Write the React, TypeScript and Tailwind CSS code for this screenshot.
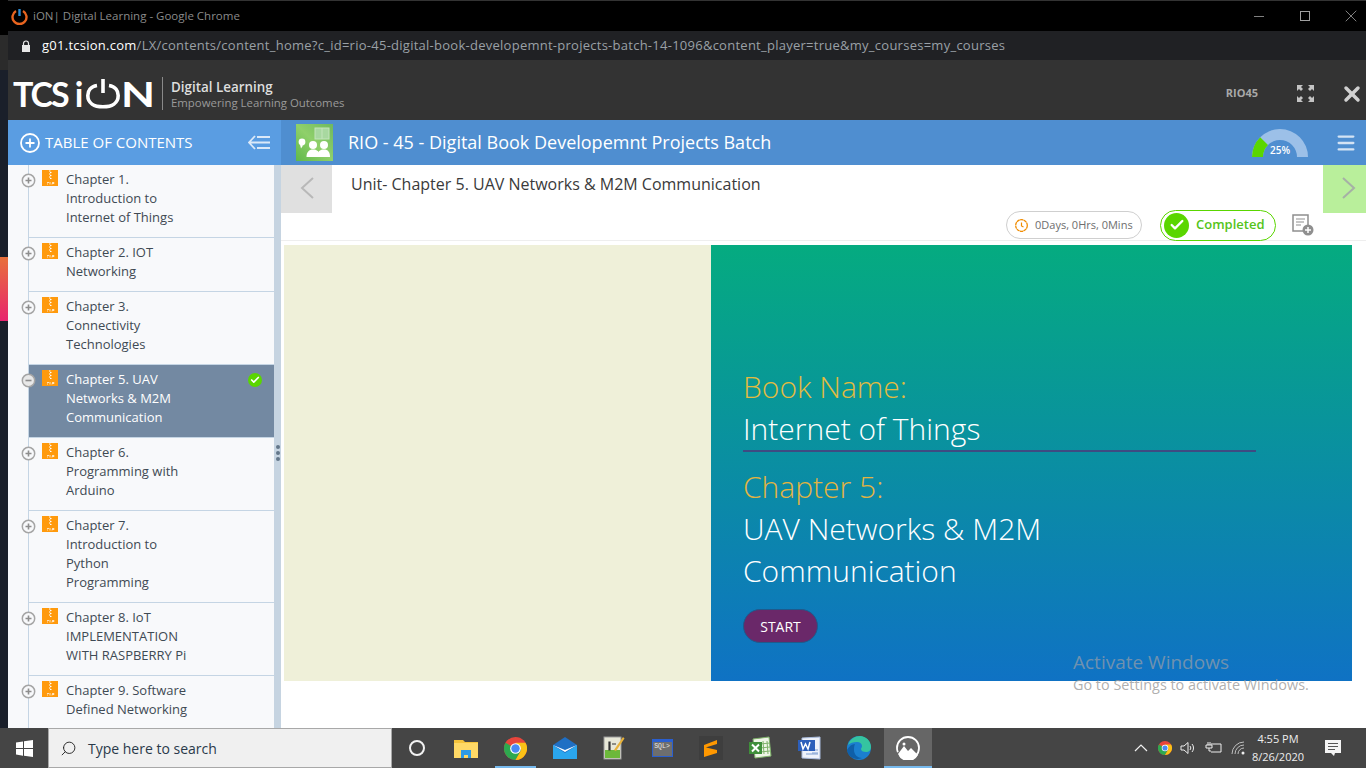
import { Menu, Search, X, Check } from "lucide-react";

const chapters = [
  { lines: ["Chapter 1.", "Introduction to", "Internet of Things"] },
  { lines: ["Chapter 2. IOT", "Networking"] },
  { lines: ["Chapter 3.", "Connectivity", "Technologies"] },
  { lines: ["Chapter 5. UAV", "Networks & M2M", "Communication"], active: true },
  { lines: ["Chapter 6.", "Programming with", "Arduino"] },
  { lines: ["Chapter 7.", "Introduction to", "Python", "Programming"] },
  { lines: ["Chapter 8. IoT", "IMPLEMENTATION", "WITH RASPBERRY Pi"] },
  { lines: ["Chapter 9. Software", "Defined Networking"], last: true },
];

function ZipIcon() {
  return (
    <svg width="16" height="16" viewBox="0 0 16 16" className="shrink-0">
      <rect width="16" height="16" fill="#ff9a0d" />
      <path d="M7 1h1.500M8 2.500h1.500M7 4h1.500M8 5.500h1.500M7 7h1.500M8 8.500h1.500" stroke="#fff" strokeWidth="1" />
      <path d="M5 12.500h2M5 14h1M8 12v2.500M10 12.500h2v1h-2v1" stroke="#fff" strokeWidth="0.7" fill="none" />
    </svg>
  );
}

function TreeToggle({ open }: { open?: boolean }) {
  return (
    <svg width="15" height="15" viewBox="0 0 15 15">
      <circle cx="7.500" cy="7.500" r="6.200" fill={open ? "#e8e8e8" : "#f8f9fb"} stroke="#a5a5a5" strokeWidth="1.500" />
      <path d={open ? "M4.500 7.500h6" : "M4.500 7.500h6M7.500 4.500v6"} stroke="#8d8d8d" strokeWidth="1.600" />
    </svg>
  );
}

function PowerLogo() {
  return (
    <svg width="34" height="30" viewBox="0 0 34 30" className="shrink-0 ml-[3px]">
      <path d="M11 6.500C4.500 7.500 1.800 12 1.800 16.500 1.800 24 8 27.800 17 27.800S32.200 24 32.200 16.500C32.200 12 29.500 7.500 23 6.500" fill="none" stroke="#fff" strokeWidth="3.600" />
      <path d="M17 0v14" stroke="#fff" strokeWidth="3.600" />
    </svg>
  );
}

function CourseIcon() {
  return (
    <svg width="37" height="37" viewBox="0 0 37 37" className="shrink-0">
      <defs>
        <linearGradient id="course" x1="0" y1="1" x2="1" y2="0">
          <stop offset="0" stopColor="#5fb84a" />
          <stop offset="0.5" stopColor="#8fd06a" />
          <stop offset="1" stopColor="#6fb95f" />
        </linearGradient>
      </defs>
      <rect width="37" height="37" fill="url(#course)" />
      <rect x="19" y="4" width="14" height="11" fill="#a8d8a0" stroke="#c4e4bc" />
      <path d="M26 4v11" stroke="#c4e4bc" />
      <circle cx="6" cy="18" r="3.400" fill="#fff" />
      <path d="M4 20.500l1 4 2-3z" fill="#fff" />
      <circle cx="17" cy="21" r="4" fill="#fff" />
      <circle cx="28" cy="21" r="4" fill="#fff" />
      <path d="M10.500 33c0-5 2.500-7.500 6.500-7.500s5.500 2 5.500 3c0-1 1.500-3 5.500-3s6 2.500 6 7.500z" fill="#fff" />
    </svg>
  );
}

function Gauge() {
  return (
    <div className="relative w-[56px] h-[28px]">
      <svg width="56" height="28" viewBox="0 0 56 28">
        <path d="M0 28a28 28 0 0 1 56 0H45a17 17 0 0 0-34 0z" fill="#9cc0e8" />
        <path d="M0 28a28 28 0 0 1 8.200-19.800L16 16a17 17 0 0 0-5 12z" fill="#5ad600" />
      </svg>
      <span className="absolute left-0 right-0 top-[14px] text-center text-[10px] leading-[14px] text-white font-semibold">25%</span>
    </div>
  );
}

function ChromeIcon({ size }: { size: number }) {
  return (
    <svg width={size} height={size} viewBox="0 0 24 24">
      <circle cx="12" cy="12" r="12" fill="#e8453c" />
      <path d="M12 12L1.600 6A12 12 0 0 0 12 24l6-10.400z" fill="#2da94f" />
      <path d="M12 6h10.400A12 12 0 0 1 12 24l6-10.400z" fill="#fbc116" />
      <circle cx="12" cy="12" r="5.600" fill="#fff" />
      <circle cx="12" cy="12" r="4.400" fill="#4a8af4" />
    </svg>
  );
}

function TaskIcons() {
  return (
    <div className="flex h-full items-stretch">
      <div className="w-[49px] flex items-center justify-center">
        <div className="w-[16px] h-[16px] rounded-full border-[2.5px] border-[#f2f2f2]" />
      </div>
      <div className="w-[50px] flex items-center justify-center">
        <svg width="24" height="20" viewBox="0 0 24 20">
          <path d="M0 2h9l2 2h13v16H0z" fill="#f5c33b" />
          <path d="M0 5h24v15H0z" fill="#ffd966" />
          <path d="M7 12h10v8h-3v-3h-4v3H7z" fill="#2f9be6" />
        </svg>
      </div>
      <div className="w-[49px] flex flex-col items-center justify-center relative">
        <ChromeIcon size={23} />
        <div className="absolute bottom-0 left-[4px] right-[4px] h-[2px] bg-[#76b9ed]" />
      </div>
      <div className="w-[49px] flex items-center justify-center">
        <svg width="24" height="22" viewBox="0 0 24 22">
          <path d="M0 8L12 0l12 8v14H0z" fill="#1f6fc4" />
          <path d="M0 8l12 8 12-8v14H0z" fill="#2aa6ee" />
          <path d="M0 8l12 7 12-7-12 5z" fill="#fff" />
        </svg>
      </div>
      <div className="w-[49px] flex items-center justify-center">
        <svg width="22" height="24" viewBox="0 0 22 24">
          <rect x="1" y="1" width="17" height="22" fill="#e8e8d8" stroke="#999" />
          <rect x="2" y="14" width="15" height="8" fill="#6cb83a" />
          <path d="M6 6h1v8H6zM9 8h4" stroke="#333" strokeWidth="1.200" />
          <path d="M20 1l1.500 1.500L13 15l-2-1z" fill="#e8b23a" />
        </svg>
      </div>
      <div className="w-[48px] flex items-center justify-center">
        <div className="w-[21px] h-[18px] bg-[#6e6e6e] border border-[#2a5fd0] border-t-[3px] text-[6.5px] leading-[10px] text-[#e8e8e8] font-mono text-center">SQL&gt;</div>
      </div>
      <div className="w-[49px] flex items-center justify-center">
        <div className="w-[24px] h-[24px] bg-[#3e3e3e] flex items-center justify-center">
          <svg width="13" height="17" viewBox="0 0 13 17">
            <path d="M13 0v4L0 8V5zM0 7l13 3v3L0 17v-4z" fill="#ff9800" />
          </svg>
        </div>
      </div>
      <div className="w-[49px] flex items-center justify-center">
        <svg width="24" height="24" viewBox="0 0 24 24">
          <path d="M5 3l16-2 2 19-16 2z" fill="#eef5e6" stroke="#7fb36a" />
          <path d="M12 8l10-1M12 12l10-1M12 16l10-1M15 5l1 13M19 5l1 13" stroke="#7fb36a" />
          <rect x="1" y="6" width="13" height="12" fill="#3f8f3a" />
          <path d="M4 8.500l7 7M11 8.500l-7 7" stroke="#fff" strokeWidth="2" />
        </svg>
      </div>
      <div className="w-[50px] flex items-center justify-center">
        <svg width="24" height="24" viewBox="0 0 24 24">
          <path d="M5 2l18-1v22l-18-1z" fill="#eef2fa" stroke="#a9bbdd" />
          <path d="M15 14h6M15 17h6M9 18h12" stroke="#7e9ed0" />
          <rect x="1" y="4" width="17" height="11" fill="#2c5fbb" />
          <path d="M4 6l2 7 2.500-5 2.500 5 2-7" fill="none" stroke="#fff" strokeWidth="1.500" />
        </svg>
      </div>
      <div className="w-[50px] flex items-center justify-center">
        <svg width="24" height="24" viewBox="0 0 24 24">
          <circle cx="12" cy="12" r="12" fill="#1b7fcf" />
          <path d="M1 9C3 3 8 0 13 0c6 0 11 5 11 11 0 3-2 5-5 5-3 0-5-1-5-3 0-1 1-1.500 1-3 0-2-2-4-5-4C6 6 3 7 1 9z" fill="#35c4a0" />
          <path d="M7 14c0 5 4 8 8 8-7 3-14-1-15-8 2-4 5-6 8-6-1 2-1 4-1 6z" fill="#0f5fa8" />
        </svg>
      </div>
      <div className="w-[48px] bg-[#666666] flex items-center justify-center relative">
        <svg width="24" height="24" viewBox="0 0 24 24">
          <circle cx="12" cy="12" r="11" fill="none" stroke="#fff" strokeWidth="1.800" strokeDasharray="26 4 40" />
          <path d="M2 18l6-8 4 5 3-3 7 7a11 11 0 0 1-20-1z" fill="#fff" />
          <circle cx="8" cy="8" r="1.500" fill="#fff" />
        </svg>
        <div className="absolute bottom-0 left-0 right-0 h-[2px] bg-[#76b9ed]" />
      </div>
    </div>
  );
}

export default function App() {
  return (
    <div className="w-[1366px] h-[768px] overflow-hidden flex flex-col bg-white relative font-['Open_Sans',sans-serif]">
      <div className="flex flex-1 min-h-0">
        {/* sliver of the window behind */}
        <div className="w-[8px] shrink-0 flex flex-col bg-[#1a1f2a]">
          <div className="h-[35px] bg-black" />
          <div className="h-[35px] bg-[#2b2b2b]" />
          <div className="h-[187px]" />
          <div className="h-[64px] bg-linear-to-b/srgb from-[#e8703a] to-[#e8246e]" />
        </div>

        <div className="flex-1 min-w-0 flex flex-col">
          {/* chrome title bar */}
          <div className="h-[31px] shrink-0 bg-black border-t border-[#333] flex items-center pl-[3px]">
            <svg width="17" height="17" viewBox="0 0 17 17" className="mr-[5px]">
              <path d="M5 3a7 7 0 1 0 7 0" fill="none" stroke="#e8641f" strokeWidth="2.400" />
              <path d="M8.500 1v7" stroke="#2b8ad0" strokeWidth="2.400" />
            </svg>
            <span className="text-[11.5px] text-[#8a8a8a]">iON| Digital Learning - Google Chrome</span>
            <div className="ml-auto flex items-center h-full">
              <div className="w-[10px] h-px bg-[#808080] mr-[36px]" />
              <div className="w-[10px] h-[10px] border border-[#a0a0a0] mr-[31px]" />
              <X size={20} strokeWidth={1.2} className="text-[#808080] mr-[5px]" />
            </div>
          </div>
          {/* url bar */}
          <div className="h-[29px] shrink-0 bg-[#202124] flex items-center pl-[13px]">
            <svg width="10" height="12" viewBox="0 0 10 12" className="mr-[11px]">
              <path d="M2.500 5V3.500a2.500 2.500 0 0 1 5 0V5" fill="none" stroke="#e8e8e8" strokeWidth="1.200" />
              <rect x="1" y="5" width="8" height="7" fill="#e8e8e8" />
            </svg>
            <span className="text-[13px] tracking-[0.26px] text-[#9aa0a6]">
              <span className="text-white">g01.tcsion.com</span>/LX/contents/content_home?c_id=rio-45-digital-book-developemnt-projects-batch-14-1096&content_player=true&my_courses=my_courses
            </span>
          </div>
          {/* site header */}
          <div className="h-[60px] shrink-0 bg-[#333333] flex items-center pl-[5px] pr-[2px] pt-[7px]">
            <div className="w-[149px] flex items-center text-white font-['Lato',sans-serif] font-bold text-[34px] leading-none">
              <span className="tracking-[-2px]">TCS</span>
              <span className="ml-[7px]">i</span>
              <PowerLogo />
              <span className="ml-[1px] scale-x-[1.3] origin-left">N</span>
            </div>
            <div className="w-px h-[33px] bg-[#8a8a8a] mr-[8px]" />
            <div className="flex flex-col mt-[3px]">
              <span className="text-[13.4px] leading-[16px] font-semibold text-[#dedede]">Digital Learning</span>
              <span className="text-[11.4px] leading-[16px] text-[#9a9a9a]">Empowering Learning Outcomes</span>
            </div>
            <span className="ml-auto text-[11px] font-bold text-[#a8a8a8] mr-[39px]">RIO45</span>
            <svg width="17" height="17" viewBox="0 0 17 17" className="mr-[26px]">
              <path d="M0 0h6L4 2l2 2-2 2-2-2-2 2zM17 0h-6l2 2-2 2 2 2 2-2 2 2zM0 17h6l-2-2 2-2-2-2-2 2-2-2zM17 17h-6l2-2-2-2 2-2 2 2 2-2z" fill="#c4c4c4" />
            </svg>
            <X size={24} strokeWidth={3.5} className="text-[#d0d0d0]" />
          </div>

          <div className="flex-1 min-h-0 flex">
            {/* table of contents */}
            <aside className="w-[273px] shrink-0 flex flex-col">
              <div className="h-[45px] shrink-0 bg-[#5a9de2] flex items-center pl-[12px] pr-[11px] text-white">
                <svg width="20" height="20" viewBox="0 0 20 20" className="mr-[5px]">
                  <circle cx="10" cy="10" r="9" fill="none" stroke="#fff" strokeWidth="1.800" />
                  <path d="M5.500 10h9M10 5.500v9" stroke="#fff" strokeWidth="1.800" />
                </svg>
                <span className="text-[15px]">TABLE OF CONTENTS</span>
                <svg width="22" height="15" viewBox="0 0 22 15" className="ml-auto">
                  <path d="M7 1L1 7.500 7 14M1 7.500h21M9 2h13M9 13h13" fill="none" stroke="#dbe9f8" strokeWidth="1.800" />
                </svg>
              </div>
              <div className="flex-1 min-h-0 flex">
                <div className="w-[266px] bg-[#f8f9fb] pl-[20px] overflow-hidden">
                  <div className="border-l border-[#c5d5e4] h-full">
                    {chapters.map((c, i) => (
                      <div
                        key={i}
                        className={`relative flex pt-[5px] pb-[10px] pl-[13px] border-[#c5d5e4] ${c.last ? "" : "border-b"} ${c.active ? "bg-[#7389a2] text-white" : "text-[#3f4a54]"}`}
                      >
                        <div className="absolute left-[-8px] top-[8px]">
                          <TreeToggle open={c.active} />
                        </div>
                        <ZipIcon />
                        <div className="ml-[8px] text-[13px] leading-[19px]">
                          {c.lines.map((l) => (
                            <div key={l} className="whitespace-nowrap">{l}</div>
                          ))}
                        </div>
                        {c.active && (
                          <div className="absolute right-[12px] top-[8px] w-[14px] h-[14px] rounded-full bg-[#5ad600] flex items-center justify-center">
                            <Check size={10} strokeWidth={4} className="text-white" />
                          </div>
                        )}
                      </div>
                    ))}
                  </div>
                </div>
                <div className="w-[7px] bg-[#c6d4e1] flex flex-col items-center justify-center gap-[2px] pt-[13px]">
                  <div className="w-[4px] h-[4px] rounded-full bg-[#64778a]" />
                  <div className="w-[4px] h-[4px] rounded-full bg-[#64778a]" />
                  <div className="w-[4px] h-[4px] rounded-full bg-[#64778a]" />
                </div>
              </div>
            </aside>

            {/* content */}
            <main className="flex-1 min-w-0 flex flex-col">
              <div className="h-[45px] shrink-0 bg-[#4f8ed0] flex items-center pl-[15px] text-white">
                <CourseIcon />
                <span className="ml-[15px] text-[18px]">RIO - 45 - Digital Book Developemnt Projects Batch</span>
                <div className="ml-auto mr-[27px]">
                  <Gauge />
                </div>
                <Menu size={22} strokeWidth={2.5} className="text-[#d4e3f4] mr-[9px]" />
              </div>
              <div className="h-[76px] shrink-0 flex border-b border-[#eeeeee]">
                <div className="w-[51px] h-[48px] bg-[#e0e0e0] flex items-center justify-center shrink-0 pb-[3px]">
                  <svg width="14" height="22" viewBox="0 0 14 22">
                    <path d="M13 1L2 11l11 10" fill="none" stroke="#b8b8b8" strokeWidth="2" />
                  </svg>
                </div>
                <div className="flex-1 min-w-0 flex flex-col">
                  <div className="h-[38px] pl-[19px] flex items-center text-[16px] text-[#3a3a3a]">
                    Unit- Chapter 5. UAV Networks &amp; M2M Communication
                  </div>
                  <div className="flex items-center justify-end h-[30px] mt-[8px] pr-[9px]">
                    <div className="w-[136px] h-[28px] rounded-full border border-[#cfcfcf] flex items-center pl-[7px] text-[11px] text-[#6e6e6e] mr-[18px]">
                      <svg width="15" height="15" viewBox="0 0 15 15" className="mr-[6px]">
                        <circle cx="7.500" cy="7.500" r="5.800" fill="none" stroke="#f08c00" strokeWidth="1.300" strokeDasharray="3.200 0.400" />
                        <path d="M7.500 4.500v3.500l2 1" fill="none" stroke="#f08c00" strokeWidth="1.200" />
                      </svg>
                      0Days, 0Hrs, 0Mins
                    </div>
                    <div className="w-[116px] h-[31px] rounded-full border border-[#5ad600] flex items-center pl-[3px] text-[13px] font-semibold text-[#55c41a] mr-[16px]">
                      <div className="w-[25px] h-[25px] rounded-full bg-[#5ad600] flex items-center justify-center mr-[7px]">
                        <Check size={16} strokeWidth={3.5} className="text-white" />
                      </div>
                      Completed
                    </div>
                    <svg width="22" height="22" viewBox="0 0 22 22">
                      <path d="M14 17H1V1h15v10" fill="none" stroke="#8f8f8f" strokeWidth="1.500" />
                      <path d="M4 5h9M4 8h8M4 11h5" stroke="#8f8f8f" strokeWidth="1.200" />
                      <circle cx="16" cy="16" r="5.500" fill="#8f8f8f" />
                      <path d="M13 16h6M16 13v6" stroke="#fff" strokeWidth="1.500" />
                    </svg>
                  </div>
                </div>
                <div className="w-[43px] h-[48px] bg-[#b9ef9b] flex items-center justify-center shrink-0 pl-[9px] pb-[3px]">
                  <svg width="14" height="22" viewBox="0 0 14 22">
                    <path d="M1 1l11 10L1 21" fill="none" stroke="#a6b0a6" strokeWidth="2" />
                  </svg>
                </div>
              </div>
              <div className="pt-[4px] pl-[3px] pr-[14px]">
                <div className="h-[436px] flex">
                  <div className="w-[427px] bg-[#eff0d9]" />
                  <div className="flex-1 bg-linear-to-b/srgb from-[#05ab80] to-[#0f72c4] pl-[32px] pt-[121px]">
                    <div className="w-[513px] border-b-2 border-[#3e4b82] font-light text-[30px] leading-[42px] text-white">
                      <div className="text-[#e3bb3f]">Book Name:</div>
                      <div>Internet of Things</div>
                    </div>
                    <div className="mt-[14px] font-light text-[30px] leading-[42px] text-white">
                      <div className="text-[#e3b441]">Chapter 5:</div>
                      <div>UAV Networks &amp; M2M</div>
                      <div>Communication</div>
                    </div>
                    <button className="mt-[17px] w-[75px] h-[34px] rounded-full bg-[#6a2869] border border-[#1e5a8c] text-white text-[14px] flex items-center justify-center">
                      START
                    </button>
                  </div>
                </div>
              </div>
            </main>
          </div>
        </div>
      </div>

      {/* taskbar */}
      <div className="h-[40px] shrink-0 bg-[#454545] flex items-stretch">
        <div className="w-[48px] flex items-center justify-center">
          <svg width="17" height="17" viewBox="0 0 17 17">
            <path d="M0 2.400L7 1.400v6.700H0zM8 1.200L17 0v8.100H8zM0 9h7v6.700L0 14.600zM8 9h9v8l-9-1.300z" fill="#fff" />
          </svg>
        </div>
        <div className="w-[344px] bg-[#f0f0f0] border-y border-[#a8a8a8] border-x flex items-center pl-[11px] text-[14px] text-[#2a3a4a]">
          <Search size={17} strokeWidth={1.3} className="-scale-x-100 text-[#222] mr-[11px]" />
          Type here to search
        </div>
        <TaskIcons />
        <div className="ml-auto flex items-center text-[#eeeeee]">
          <svg width="14" height="8" viewBox="0 0 14 8" className="mr-[10px]">
            <path d="M1 7l6-6 6 6" fill="none" stroke="#f0f0f0" strokeWidth="1.200" />
          </svg>
          <ChromeIcon size={14} />
          <svg width="16" height="14" viewBox="0 0 16 14" className="ml-[8px] mr-[9px]">
            <path d="M1 5h3l4-3.500v11L4 9H1zM10 5a3 3 0 0 1 0 4M12 3a6 6 0 0 1 0 8" fill="none" stroke="#eee" strokeWidth="1" />
          </svg>
          <svg width="17" height="12" viewBox="0 0 17 12" className="mr-[9px]">
            <path d="M3 0v3M5 0v3M1 3h6v3H1zM4 6v3h2M6 2h10v8H6" fill="none" stroke="#eee" strokeWidth="1" />
          </svg>
          <svg width="14" height="14" viewBox="0 0 14 14" className="mr-[2px]">
            <path d="M1 13a12 12 0 0 1 12-12M4 13a9 9 0 0 1 9-9M7 13a6 6 0 0 1 6-6" fill="none" stroke="#ccc" strokeWidth="0.900" />
            <circle cx="12" cy="12" r="1.500" fill="#eee" />
          </svg>
          <div className="w-[62px] text-center text-[11px] leading-[18px] whitespace-nowrap">
            <div>4:55 PM</div>
            <div>8/26/2020</div>
          </div>
          <svg width="17" height="17" viewBox="0 0 17 17" className="ml-[16px] mr-[24px]">
            <path d="M0 0h16v13H10l-1 3-3-3H0z" fill="#f4f4f4" />
            <path d="M3 3.500h10M3 6.500h10M3 9.500h7" stroke="#555" />
          </svg>
        </div>
      </div>

      {/* activation watermark */}
      <div className="absolute left-[1073px] top-[650px] text-[#8a9aaa]/80 pointer-events-none">
        <div className="text-[19px] leading-[24px]">Activate Windows</div>
        <div className="text-[14.4px] leading-[22px] text-[#9a9a9a]/80">Go to Settings to activate Windows.</div>
      </div>
    </div>
  );
}
